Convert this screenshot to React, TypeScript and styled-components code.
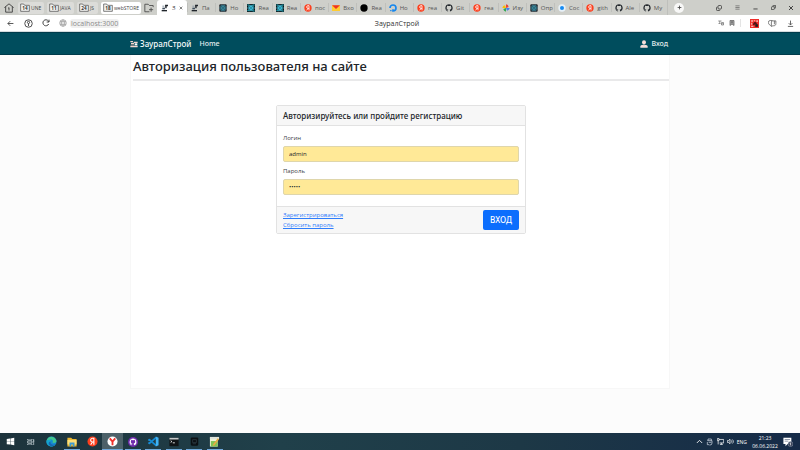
import React, { useState } from "react";
import styled, { createGlobalStyle } from "styled-components";

const GlobalStyle = createGlobalStyle`
  * { box-sizing: border-box; }
  body {
    margin: 0;
    font-family: "Open Sans", "Noto Sans", sans-serif;
    color: #212529;
    background: #fcfcfc;
  }
  button, input { font-family: inherit; }
`;

const Screen = styled.div`
  display: flex;
  flex-direction: column;
  min-height: 100vh;
  overflow: hidden;
`;

/* Browser chrome */
const TabStrip = styled.div`
  display: flex;
  align-items: stretch;
  height: 15px;
  background: #cecfca;
  color: #444;
  font-size: 6px;
`;

const IconButton = styled.button<{ $width?: number }>`
  display: flex;
  align-items: center;
  justify-content: center;
  flex: none;
  width: ${(p) => p.$width ?? 18}px;
  padding: 0;
  border: 0;
  background: none;
  color: inherit;
`;

const Groups = styled.div`
  display: flex;
  align-items: center;
  flex: none;
  gap: 3px;
  width: 139px;
`;

const Group = styled.button<{ $active?: boolean; $width: number }>`
  display: flex;
  align-items: center;
  flex: none;
  gap: 1px;
  width: ${(p) => p.$width}px;
  height: 12px;
  padding: 0 2px;
  border: 0;
  border-radius: 2px;
  background: ${(p) => (p.$active ? "#fff" : "#dcdcd9")};
  color: #444;
  font-size: 5px;
  line-height: 8px;
  white-space: nowrap;
`;

const ActiveTab = styled.button`
  display: flex;
  align-items: center;
  flex: none;
  gap: 3px;
  width: 30px;
  padding: 0 4px;
  border: 0;
  border-radius: 3px 3px 0 0;
  background: #fff;
  color: #444;
  font-size: 6px;
`;

const Tabs = styled.div`
  display: flex;
  flex: 0 1 481px;
  min-width: 0;
  border-right: 1px solid #bfc0bc;
`;

const Tab = styled.button`
  display: flex;
  align-items: center;
  flex: 1 1 0;
  gap: 3px;
  min-width: 0;
  padding: 0 3px 0 4px;
  border: 0;
  background: linear-gradient(#bfc0bc, #bfc0bc) left center / 1px 9px no-repeat;
  color: #555;
  font-size: 6px;
  overflow: hidden;
  white-space: nowrap;
`;

const NewTab = styled.button`
  display: flex;
  align-items: center;
  justify-content: center;
  align-self: center;
  flex: none;
  width: 10px;
  height: 10px;
  margin-left: 6px;
  padding: 0;
  border: 0;
  border-radius: 50%;
  background: #f8f8f7;
  color: #444;
`;

const WindowControls = styled.div`
  display: flex;
  margin-left: auto;
`;

const AddressBar = styled.div`
  display: grid;
  grid-template-columns: 1fr auto 1fr;
  align-items: center;
  height: 17px;
  padding: 0 1px;
  background: #fff;
  border-bottom: 1px solid #d5dcde;
  color: #555;
`;

const AddressTools = styled.div<{ $end?: boolean }>`
  display: flex;
  align-items: center;
  justify-content: ${(p) => (p.$end ? "flex-end" : "flex-start")};
`;

const Address = styled.div`
  padding: 0 1px;
  border-radius: 3px;
  background: #f0f0f0;
  color: #8b8b8b;
  font-size: 7px;
  line-height: 9px;
`;

const PageTitle = styled.div`
  padding-right: 6px;
  font-size: 7px;
  line-height: 9px;
  color: #333;
`;

const ToolDivider = styled.span`
  width: 1px;
  height: 8px;
  margin: 0 4px 0 3px;
  background: #e4e4e4;
`;

/* Site */
const Navbar = styled.nav`
  display: flex;
  justify-content: center;
  padding: 0 130px;
  background: #004d5d;
  border-top: 1px solid #003b4b;
  border-bottom: 1px solid #003b4b;
`;

const NavInner = styled.div`
  display: flex;
  align-items: center;
  flex: 1;
  height: 21px;
`;

const NavLink = styled.a<{ $brand?: boolean; $end?: boolean }>`
  display: flex;
  align-items: center;
  gap: ${(p) => (p.$end ? 3 : 2)}px;
  margin-left: ${(p) => (p.$end ? "auto" : "0")};
  margin-right: ${(p) => (p.$brand ? 8 : 2)}px;
  color: ${(p) => (p.$brand ? "#f4fafb" : "#e5eff1")};
  font-family: "Noto Sans", sans-serif;
  font-size: ${(p) => (p.$brand ? 8 : 7)}px;
  font-weight: 500;
  line-height: 12px;
  text-decoration: none;
`;

const Backdrop = styled.div`
  flex: 1;
  padding: 0 130px 44px;
  display: flex;
  background: #fcfcfc;
`;

const Content = styled.main`
  flex: 1;
  display: flex;
  flex-direction: column;
  padding: 0 0 0 2px;
  background: #fff;
  border: 1px solid #f7f7f7;
  border-top: 0;
`;

const Heading = styled.h1`
  margin: 0 0 24px;
  padding-bottom: 1px;
  border-bottom: 2px solid #e9e9ea;
  font-family: "Noto Sans", sans-serif;
  font-size: 13px;
  font-weight: 500;
  line-height: 23px;
`;

const Card = styled.form`
  align-self: center;
  width: 250px;
  max-width: 100%;
  background: #fff;
  border: 1px solid #e2e2e2;
  border-radius: 2px;
`;

const CardHeader = styled.h2`
  margin: 0;
  padding: 3px 6px;
  background: #f7f7f7;
  border-bottom: 1px solid #e2e2e2;
  font-family: "Noto Sans", sans-serif;
  font-size: 8px;
  font-weight: 500;
  line-height: 13px;
`;

const CardBody = styled.div`
  padding: 7px 6px 11px;
`;

const Field = styled.div`
  display: flex;
  flex-direction: column;
  gap: 3px;
  & + & { margin-top: 4px; }
`;

const Label = styled.label`
  font-size: 6px;
  line-height: 10px;
  color: #3b4146;
`;

const Input = styled.input`
  width: 100%;
  height: 16px;
  padding: 0 5px;
  border: 1px solid #dfd6ab;
  border-radius: 2px;
  background: #ffe997;
  color: #212529;
  font-size: 6px;
  line-height: 10px;
  outline: 0;
`;

const CardFooter = styled.div`
  display: flex;
  align-items: center;
  justify-content: space-between;
  padding: 3px 6px;
  background: #f7f7f7;
  border-top: 1px solid #e2e2e2;
`;

const FooterLinks = styled.div`
  display: flex;
  flex-direction: column;
`;

const TextLink = styled.a`
  color: #2f7dfb;
  font-size: 6px;
  line-height: 10px;
`;

const Submit = styled.button`
  width: 36px;
  height: 20px;
  padding: 0;
  border: 0;
  border-radius: 2px;
  background: #0d6efd;
  color: #fff;
  font-family: "Noto Sans", sans-serif;
  font-size: 8px;
  font-weight: 500;
  line-height: 12px;
`;

/* Taskbar */
const Taskbar = styled.footer`
  display: flex;
  justify-content: space-between;
  height: 17px;
  background: linear-gradient(90deg, #1d333c, #20404a 35%, #1d3846 65%, #162b48);
  color: #fff;
`;

const Apps = styled.div`
  display: grid;
  grid-template-columns: repeat(11, 1fr);
  width: 225px;
`;

const AppButton = styled.button<{ $running?: boolean; $active?: boolean }>`
  display: flex;
  align-items: center;
  justify-content: center;
  padding: 0;
  border: 0;
  color: #fff;
  background: linear-gradient(#6fa9dc, #6fa9dc) center bottom /
    ${(p) => (p.$active ? "100%" : "16px")} ${(p) => (p.$running ? "1px" : "0")} no-repeat
    ${(p) => (p.$active ? "#4c6169" : "transparent")};
`;

const Tray = styled.div`
  display: flex;
  align-items: center;
  gap: 3px;
  padding-right: 7px;
  font-size: 5px;
`;

const Clock = styled.div`
  display: flex;
  flex-direction: column;
  align-items: center;
  width: 30px;
  font-size: 5px;
  line-height: 8px;
`;

const Svg = styled.svg<{ $size?: number }>`
  display: block;
  flex: none;
  width: ${(p) => p.$size ?? 8}px;
  height: ${(p) => p.$size ?? 8}px;
`;

type IconName =
  | "home" | "folderPlus" | "brand" | "crane" | "node" | "react" | "yandex" | "mail"
  | "black" | "swirl" | "github" | "pinwheel" | "blueDot" | "plus" | "close" | "copy"
  | "menu" | "minimize" | "restore" | "back" | "alice" | "reload" | "globe" | "translate"
  | "bookmark" | "extension" | "collections" | "download" | "user" | "windows" | "tasks"
  | "edge" | "explorer" | "browser" | "githubApp" | "vscode" | "terminal" | "database"
  | "notepad" | "up" | "usb" | "network" | "sound" | "notice";

const catPath =
  "M12 1a11 11 0 0 0-3.5 21.4c.6.1.8-.2.8-.6v-2.2c-3.1.7-3.8-1.3-3.8-1.3-.5-1.3-1.2-1.7-1.2-1.7-1-.7.1-.7.1-.7 1.1.1 1.7 1.2 1.7 1.2 1 1.7 2.6 1.2 3.2.9.1-.7.4-1.2.7-1.5-2.5-.3-5.1-1.2-5.1-5.5 0-1.2.4-2.2 1.2-3-.1-.3-.5-1.4.1-3 0 0 .9-.3 3 1.1a11 11 0 0 1 5.6 0c2.1-1.4 3-1.1 3-1.1.6 1.6.2 2.7.1 3 .8.8 1.2 1.8 1.2 3 0 4.3-2.6 5.2-5.1 5.5.4.4.8 1.1.8 2.1v3.2c0 .4.2.7.8.6A11 11 0 0 0 12 1z";

const atom = (color: string, width = 1.5) => (
  <g fill="none" stroke={color} strokeWidth={width}>
    <ellipse cx="12" cy="12" rx="10" ry="4" />
    <ellipse cx="12" cy="12" rx="10" ry="4" transform="rotate(60 12 12)" />
    <ellipse cx="12" cy="12" rx="10" ry="4" transform="rotate(120 12 12)" />
    <circle cx="12" cy="12" r="1.5" fill={color} />
  </g>
);

const drawings: Record<IconName, React.ReactNode> = {
  home: <g fill="none" stroke="#333" strokeWidth="2"><path d="M1 11 12 2l11 9M4 9v13h16V9" /><path d="M12 11v7M10 12h2" /></g>,
  folderPlus: <g fill="none" stroke="#444" strokeWidth="2"><path d="M13 21H2V3h8l3 3h9v4M17 11v10M12 16h10" /></g>,
  brand: <g><path d="M1 3h8v4H1zM11 5h12v4H11zM3 9h9v4H3zM1 17h22v5H1z" fill="#f3d6cf" /><path d="M14 10h8v6h-8z" fill="#fff" /><path d="M2 14h10v2H2z" fill="#e59b8c" /></g>,
  crane: <g><path d="M12 2h9v5h-4v6h-4z" fill="#20252b" /><path d="M4 11h8v5H4z" fill="#41505f" /><path d="M2 18h16v4H2z" fill="#20252b" /><path d="M4 5h6v3H4z" fill="#8c9aa6" /></g>,
  node: <g><rect x="1" y="1" width="22" height="22" rx="3" fill="#20242b" />{atom("#3b93a8", 2)}</g>,
  react: <g><rect width="24" height="24" fill="#10181c" />{atom("#42d1ee", 2)}<path d="M1 3h5M18 21h5M1 20h5M18 3h5" stroke="#20a9b7" strokeWidth="3" /></g>,
  yandex: <g><circle cx="12" cy="12" r="11" fill="#fc3f1d" /><path d="M15 19V5h-3a4 4 0 0 0 0 8h3m-3 0-4 6" fill="none" stroke="#fff" strokeWidth="2.4" /></g>,
  mail: <g><path d="M0 4h24v17H0z" fill="#ffcc2f" /><path d="M0 4h24L12 15z" fill="#ed3325" /></g>,
  black: <circle cx="12" cy="12" r="11" />,
  swirl: <g fill="none" stroke="#1687ed" strokeWidth="5"><path d="M3 12a9 9 0 1 1 9 9v-5" /><path d="M3 20h5" strokeWidth="3" /></g>,
  github: <path d={catPath} fill="#24292e" />,
  pinwheel: <g><path d="M12 12V1a9 9 0 0 1 8 8z" fill="#ea4335" /><path d="M12 12h11a9 9 0 0 1-8 8z" fill="#4285f4" /><path d="M12 12v11a9 9 0 0 1-8-8z" fill="#34a853" /><path d="M12 12H1a9 9 0 0 1 8-8z" fill="#fbbc05" /></g>,
  blueDot: <g><circle cx="12" cy="12" r="11" fill="#e7f1f8" /><circle cx="12" cy="12" r="6" fill="#168bf2" /></g>,
  plus: <path d="M12 3v18M3 12h18" stroke="#444" strokeWidth="4" />,
  close: <path d="m4 4 16 16M20 4 4 20" stroke="#444" strokeWidth="4" />,
  copy: <g fill="none" stroke="#333" strokeWidth="3"><rect x="8" y="2" width="14" height="14" rx="4" /><path d="M6 8H5a3 3 0 0 0-3 3v8a3 3 0 0 0 3 3h8a3 3 0 0 0 3-3" /></g>,
  menu: <path d="M2 4h20M2 12h20M2 20h20" stroke="#555" strokeWidth="3" />,
  minimize: <path d="M2 19h20" stroke="#333" strokeWidth="4" />,
  restore: <g fill="none" stroke="#333" strokeWidth="3.5"><path d="M8 6a4 4 0 0 1 4-4h10v10a4 4 0 0 1-4 4" /><path d="M2 12a4 4 0 0 1 4-4h10v10a4 4 0 0 1-4 4H2z" /></g>,
  back: <path d="M22 12H3m8-8-8 8 8 8" fill="none" stroke="#444" strokeWidth="3" />,
  alice: <g fill="none" stroke="#444" strokeWidth="2.5"><circle cx="12" cy="12" r="10" /><path d="M12 19v-7" /><circle cx="12" cy="9" r="3" /></g>,
  reload: <path d="M20 15a9 9 0 1 1-1-9l2 3m0-7v7h-7" fill="none" stroke="#444" strokeWidth="3" />,
  globe: <g fill="none" stroke="#999" strokeWidth="2"><circle cx="12" cy="12" r="10" fill="#eee" /><path d="M3 8h18M3 16h18M12 2c-6 6-6 14 0 20M12 2c6 6 6 14 0 20" /></g>,
  translate: <g fill="none" stroke="#777" strokeWidth="3"><path d="M1 4h13M7 4v10M2 14h8M14 10h8v10h-8zM14 15h8" /></g>,
  bookmark: <path d="M4 2h16v20l-8-6-8 6zM8 7h8M8 11h8" fill="#aaa" stroke="#666" strokeWidth="3" />,
  extension: <g><rect width="24" height="24" fill="#ee2d2a" /><path d="M9 11c2-4 7-4 9 0l1 4-6-1-2 3-3-2z" fill="#4e1115" /><path d="M3 3h5v4H3zM10 3h4v3h-4zM17 3h4v5h-4zM3 10h3v5H3zM3 18h6v3H3z" fill="#f6b8b3" /><path d="M14 14h7v7h-7z" fill="#1d1d1d" /></g>,
  collections: <g fill="none" stroke="#555" strokeWidth="2"><path d="M8 17H6c-3-2-5-5-5-8a5 5 0 0 1 5-5h6M9 20V8a3 3 0 0 1 3-3h9v7c0 4-2 6-6 6h-2zM17 5v9" /></g>,
  download: <path d="M12 2v15m-6-6 6 6 6-6M3 22h18" fill="none" stroke="#555" strokeWidth="3" />,
  user: <g fill="#f7ded9"><path d="M12 1a6 6 0 0 1 6 6c0 3-2 7-6 7S6 10 6 7a6 6 0 0 1 6-6zM1 23v-4c0-3 4-4 8-5l3 2 3-2c4 1 8 2 8 5v4z" /></g>,
  windows: <path d="m2 5 9-1v7H2zm10-1 10-2v9H12zM2 12h9v8l-9-1zm10 0h10v10l-10-2z" fill="#fff" />,
  tasks: <g fill="none" stroke="#dbe6ea" strokeWidth="2"><path d="M2 3v3h13V3M2 21v-3h13v3M2 9h13v6H2zM20 3v18M18 9h4" /></g>,
  edge: <g><circle cx="12" cy="12" r="11" fill="#168bd2" /><path d="M1 11C3 0 17-2 22 8c3 8-6 8-8 6 3-4-1-7-5-6-3 0-6 2-8 3z" fill="#43c78e" /><path d="M1 11c3-4 10-4 11 0-4 1-4 7 1 9 4 1 7-1 8-2-2 4-6 5-9 5C5 23 0 17 1 11z" fill="#15a5ce" /><path d="M10 12c-2 5 4 9 10 6-3 5-11 6-14 0-1-3 1-6 4-6z" fill="#1766b2" /></g>,
  explorer: <g><path d="M1 2h9l3 3h10v18H1z" fill="#eab52f" /><path d="M1 7h22v11H1z" fill="#ffe079" /><path d="M6 13h12v10h-4v-5h-4v5H6z" fill="#3e9bd1" /></g>,
  browser: <g><circle cx="12" cy="12" r="11" fill="#fff" /><path d="m6 5 6 7 6-7M12 11v9" fill="none" stroke="#ef302a" strokeWidth="4" /></g>,
  githubApp: <g><circle cx="12" cy="12" r="12" fill="#6f2bad" /><path d={catPath} fill="#fff" transform="translate(3 3) scale(.75)" /></g>,
  vscode: <g fill="none" strokeLinejoin="round"><path d="m18 3-15 13-2-2M18 21 3 8 1 10" stroke="#168bd5" strokeWidth="4" /><path d="m17 1 6 3v16l-6 3V1z" fill="#40b2f4" /></g>,
  terminal: <g><rect x="1" y="2" width="22" height="20" fill="#101416" /><path d="M1 2h22v4H1z" fill="#c5c9ca" /><path d="m4 9 3 2-3 2m5 1h5" stroke="#fff" strokeWidth="2" fill="none" /></g>,
  database: <g><rect x="2" y="1" width="20" height="22" rx="3" fill="#0b1013" /><path d="M7 7h10v8H7zM7 18h9" stroke="#2f3d45" strokeWidth="2" fill="none" /></g>,
  notepad: <g><path d="M2 3h17v20H2z" fill="#f0f4dc" /><path d="M2 2h20v5H2z" fill="#dfe5dc" /><path d="M4 11h15v12H4z" fill="#80c455" /><path d="m9 18 10-13 3 2-10 13-4 2z" fill="#e9ac43" /></g>,
  up: <path d="m3 17 9-9 9 9" fill="none" stroke="#fff" strokeWidth="3" />,
  usb: <g fill="none" stroke="#dbe3ed" strokeWidth="2"><path d="M6 8V3h10v5M4 8h14v7a6 6 0 0 1-6 6h-2M8 13h8M4 12v8h5" /></g>,
  network: <g fill="none" stroke="#fff" strokeWidth="2.5"><path d="M7 5h16v12H9M15 17v5M10 22h10M1 2h6v7H1zM4 9v13" /></g>,
  sound: <path d="M1 9h4l5-5v16l-5-5H1zM14 8c3 2 3 6 0 8M18 5c5 4 5 10 0 14" fill="none" stroke="#fff" strokeWidth="2.5" />,
  notice: <g><path d="M1 2h19v15h-9l-5 5v-5H1z" fill="#fff" /><path d="M4 6h13M4 10h9" stroke="#53617b" strokeWidth="1.5" /><circle cx="18" cy="17" r="6" fill="#38435a" stroke="#adb7c8" /><path d="M16 15l2-1v6" fill="none" stroke="#fff" strokeWidth="1.5" /></g>,
};

const Icon = ({ name, size }: { name: IconName; size?: number }) => (
  <Svg viewBox="0 0 24 24" $size={size} aria-hidden="true">{drawings[name]}</Svg>
);

const FolderSvg = styled.svg`
  display: block;
  flex: none;
  width: 10px;
  height: 9px;
`;

const Folder = ({ count }: { count: number }) => (
  <FolderSvg viewBox="0 0 30 27" aria-hidden="true">
    <path d="M2 3h9l3 4h14v18H2z" fill="#f3f3f1" stroke="#444" strokeWidth="2" />
    <text x="15" y="22" fontSize="14" fontWeight="700" textAnchor="middle" fill="#333">{count}</text>
  </FolderSvg>
);

const groups = [
  { count: 14, name: "UNE", width: 26 },
  { count: 11, name: "JAVA", width: 27 },
  { count: 24, name: "JS", width: 21 },
  { count: 18, name: "webSTORE", width: 40, active: true },
];

const tabs: { icon: IconName; title: string }[] = [
  { icon: "crane", title: "Па" }, { icon: "node", title: "Но" },
  { icon: "react", title: "Rea" }, { icon: "react", title: "Rea" },
  { icon: "yandex", title: "пос" }, { icon: "mail", title: "Вхо" },
  { icon: "black", title: "Rea" }, { icon: "swirl", title: "Но" },
  { icon: "yandex", title: "rea" }, { icon: "github", title: "Git" },
  { icon: "yandex", title: "rea" }, { icon: "pinwheel", title: "Изу" },
  { icon: "node", title: "Опр" }, { icon: "blueDot", title: "Сос" },
  { icon: "yandex", title: "gith" }, { icon: "github", title: "Ale" },
  { icon: "github", title: "My" },
];

const windowControls: { icon: IconName; label: string; size: number }[] = [
  { icon: "copy", label: "Панель вкладок", size: 6 },
  { icon: "menu", label: "Меню", size: 5 },
  { icon: "minimize", label: "Свернуть", size: 5 },
  { icon: "restore", label: "Восстановить", size: 5 },
  { icon: "close", label: "Закрыть", size: 6 },
];

const apps: { icon: IconName; label: string; size: number; running?: boolean; active?: boolean }[] = [
  { icon: "windows", label: "Пуск", size: 9 },
  { icon: "tasks", label: "Представление задач", size: 8 },
  { icon: "edge", label: "Edge", size: 11 },
  { icon: "explorer", label: "Проводник", size: 10, running: true },
  { icon: "yandex", label: "Яндекс", size: 11 },
  { icon: "browser", label: "Яндекс Браузер", size: 11, running: true, active: true },
  { icon: "githubApp", label: "GitHub Desktop", size: 10, running: true },
  { icon: "vscode", label: "Visual Studio Code", size: 11, running: true },
  { icon: "terminal", label: "Терминал", size: 10, running: true },
  { icon: "database", label: "База данных", size: 9, running: true },
  { icon: "notepad", label: "Notepad++", size: 11, running: true },
];

export default function App() {
  const [login, setLogin] = useState("admin");
  const [password, setPassword] = useState("admin");

  return (
    <Screen>
      <GlobalStyle />
      <TabStrip>
        <IconButton aria-label="Главная"><Icon name="home" size={10} /></IconButton>
        <Groups>
          {groups.map((g) => (
            <Group key={g.name} $width={g.width} $active={g.active}>
              <Folder count={g.count} />{g.name}
            </Group>
          ))}
          <IconButton $width={10} aria-label="Новая группа"><Icon name="folderPlus" size={10} /></IconButton>
        </Groups>
        <ActiveTab><Icon name="crane" size={8} />З<Icon name="close" size={4} /></ActiveTab>
        <Tabs>
          {tabs.map((t, i) => <Tab key={i}><Icon name={t.icon} />{t.title}</Tab>)}
        </Tabs>
        <NewTab aria-label="Новая вкладка"><Icon name="plus" size={5} /></NewTab>
        <WindowControls>
          {windowControls.map((c) => (
            <IconButton key={c.icon} aria-label={c.label}><Icon name={c.icon} size={c.size} /></IconButton>
          ))}
        </WindowControls>
      </TabStrip>

      <AddressBar>
        <AddressTools>
          <IconButton aria-label="Назад"><Icon name="back" size={7} /></IconButton>
          <IconButton aria-label="Протект"><Icon name="alice" size={9} /></IconButton>
          <IconButton aria-label="Обновить"><Icon name="reload" size={8} /></IconButton>
          <IconButton $width={15} aria-label="Сайт"><Icon name="globe" size={8} /></IconButton>
          <Address>localhost:3000</Address>
        </AddressTools>
        <PageTitle>ЗауралСтрой</PageTitle>
        <AddressTools $end>
          <IconButton $width={10} aria-label="Перевести"><Icon name="translate" size={6} /></IconButton>
          <IconButton $width={11} aria-label="В закладки"><Icon name="bookmark" size={6} /></IconButton>
          <ToolDivider />
          <IconButton aria-label="Расширение"><Icon name="extension" size={9} /></IconButton>
          <IconButton aria-label="Коллекции"><Icon name="collections" size={9} /></IconButton>
          <IconButton aria-label="Загрузки"><Icon name="download" size={7} /></IconButton>
        </AddressTools>
      </AddressBar>

      <Navbar>
        <NavInner>
          <NavLink $brand href="#"><Icon name="brand" />ЗауралСтрой</NavLink>
          <NavLink href="#home">Home</NavLink>
          <NavLink $end href="#login"><Icon name="user" />Вход</NavLink>
        </NavInner>
      </Navbar>

      <Backdrop>
        <Content>
          <Heading>Авторизация пользователя на сайте</Heading>
          <Card onSubmit={(e) => e.preventDefault()}>
            <CardHeader>Авторизируйтесь или пройдите регистрацию</CardHeader>
            <CardBody>
              <Field>
                <Label htmlFor="login">Логин</Label>
                <Input id="login" value={login} onChange={(e) => setLogin(e.target.value)} />
              </Field>
              <Field>
                <Label htmlFor="password">Пароль</Label>
                <Input id="password" type="password" value={password} onChange={(e) => setPassword(e.target.value)} />
              </Field>
            </CardBody>
            <CardFooter>
              <FooterLinks>
                <TextLink href="#register">Зарегистрироваться</TextLink>
                <TextLink href="#reset">Сбросить пароль</TextLink>
              </FooterLinks>
              <Submit type="submit">ВХОД</Submit>
            </CardFooter>
          </Card>
        </Content>
      </Backdrop>

      <Taskbar>
        <Apps>
          {apps.map((a) => (
            <AppButton key={a.label} aria-label={a.label} $running={a.running} $active={a.active}>
              <Icon name={a.icon} size={a.size} />
            </AppButton>
          ))}
        </Apps>
        <Tray>
          <Icon name="up" size={7} />
          <Icon name="usb" size={8} />
          <Icon name="network" size={7} />
          <Icon name="sound" size={7} />
          <span>ENG</span>
          <Clock><span>21:23</span><span>06.06.2022</span></Clock>
          <Icon name="notice" size={10} />
        </Tray>
      </Taskbar>
    </Screen>
  );
}
